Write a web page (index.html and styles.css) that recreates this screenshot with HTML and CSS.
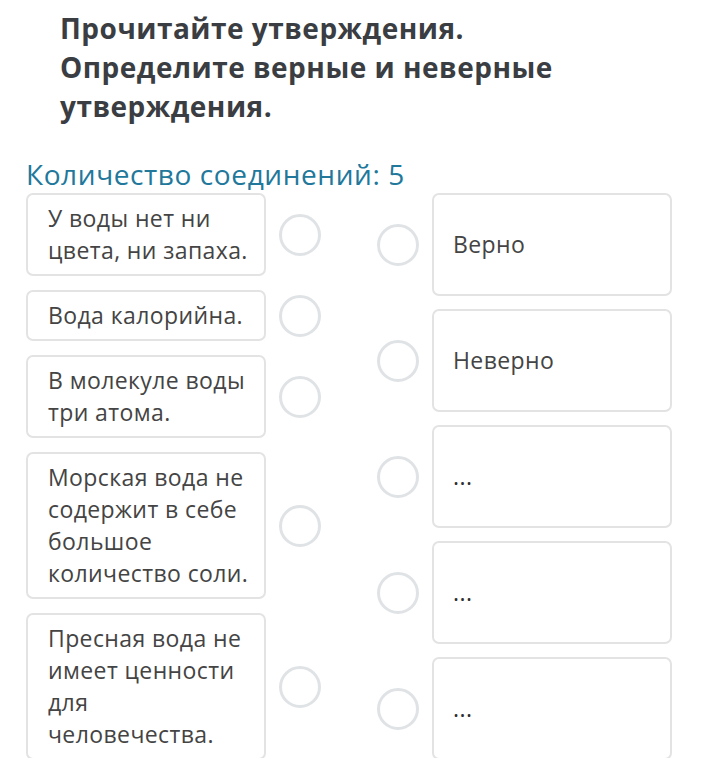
FILE: index.html
```html
<!DOCTYPE html>
<html lang="ru">

<head>
  <meta charset="UTF-8" />
  <meta name="viewport" content="width=device-width, initial-scale=1.0"/>
  <title>Соединения</title>
  <link rel="stylesheet" href="styles.css">
</head>

<body>

  <div class="task">
    <h1 class="task-title">Прочитайте утверждения. Определите верные и неверные утверждения.</h1>
    <h2 class="task-count">Количество соединений: 5</h2>

    <div class="board">

      <!-- Statements -->
      <div class="column">
        <div class="row">
          <div class="card">У воды нет ни цвета, ни запаха.</div>
          <span class="dot"></span>
        </div>
        <div class="row">
          <div class="card">Вода калорийна.</div>
          <span class="dot"></span>
        </div>
        <div class="row">
          <div class="card">В молекуле воды три атома.</div>
          <span class="dot"></span>
        </div>
        <div class="row">
          <div class="card">Морская вода не содержит в себе большое количество соли.</div>
          <span class="dot"></span>
        </div>
        <div class="row">
          <div class="card">Пресная вода не имеет ценности для человечества.</div>
          <span class="dot"></span>
        </div>
      </div>

      <!-- Answers -->
      <div class="column answers">
        <div class="row">
          <span class="dot"></span>
          <div class="card answer">Верно</div>
        </div>
        <div class="row">
          <span class="dot"></span>
          <div class="card answer">Неверно</div>
        </div>
        <div class="row">
          <span class="dot"></span>
          <div class="card answer empty">...</div>
        </div>
        <div class="row">
          <span class="dot"></span>
          <div class="card answer empty">...</div>
        </div>
        <div class="row">
          <span class="dot"></span>
          <div class="card answer empty">...</div>
        </div>
      </div>

    </div>
  </div>

</body>
</html>
```

FILE: styles.css
```css
:root {
  --text: #444444;
  --title: #3a3d42;
  --blue: #21789b;
  --border: #e3e3e3;
  --ring: #e0e3e6;
}

* {
  margin: 0;
  padding: 0;
  box-sizing: border-box;
  font-family: 'Open Sans', 'Noto Sans', sans-serif;
}

body {
  background: #ffffff;
  color: var(--text);
}

.task {
  padding: 9px 0 0 26px;
}

.task-title {
  width: 540px;
  margin-left: 34px;
  font-size: 28px;
  line-height: 39px;
  letter-spacing: 0.5px;
  font-weight: 700;
  color: var(--title);
}

.task-count {
  margin-top: 31px;
  margin-bottom: 2px;
  font-size: 28px;
  line-height: 34px;
  letter-spacing: 0.6px;
  font-weight: 400;
  color: var(--blue);
}

.board {
  display: flex;
  gap: 56px;
}

.column {
  display: flex;
  flex-direction: column;
  gap: 14px;
}

.answers {
  gap: 13px;
}

.row {
  display: flex;
  align-items: center;
  gap: 13px;
}

.card {
  width: 240px;
  padding: 7px 12px 8px 20px;
  border: 2px solid var(--border);
  border-radius: 7px;
  font-size: 23px;
  line-height: 32px;
  letter-spacing: 0.4px;
  color: var(--text);
  background: #ffffff;
}

.answer {
  min-height: 103px;
  display: flex;
  align-items: center;
  padding-left: 19px;
}

.empty {
  color: #2e2e2e;
}

.dot {
  width: 42px;
  height: 42px;
  flex-shrink: 0;
  border: 3px solid var(--ring);
  border-radius: 50%;
}
```
